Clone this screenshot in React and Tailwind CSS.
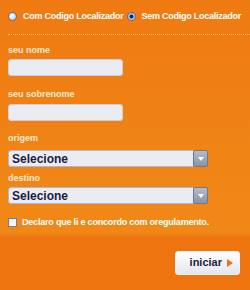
import React from "react";

const Radio = ({ checked }) => (
  <span
    className={
      "inline-block shrink-0 w-[9px] h-[9px] rounded-full border border-[#5a6f8e] " +
      (checked
        ? "bg-[radial-gradient(circle,#0a2a6a_0,#0a2a6a_35%,#9fb4d8_45%,#e6eefa_100%)]"
        : "bg-[radial-gradient(circle_at_35%_35%,#ffffff_0,#dfe7f2_45%,#9fb0c8_100%)]")
    }
  />
);

const Select = () => (
  <div className="flex items-center w-[200px] h-[17px]">
    <div className="flex-1 h-full rounded-l-[3px] border border-[#a9b8d4] bg-[#ebecf2] flex items-center pl-[3px] text-[12px] font-bold text-[#1c1c44]">
      Selecione
    </div>
    <div className="w-[15px] h-full rounded-[2px] border border-[#6f7890] bg-[linear-gradient(#b5bccb,#8a93a8)] flex items-center justify-center ml-[-1px]">
      <span className="w-0 h-0 border-l-[3px] border-r-[3px] border-t-[4px] border-l-transparent border-r-transparent border-t-white" />
    </div>
  </div>
);

const App = () => {
  return (
    <div className="w-[250px] h-[290px] bg-[linear-gradient(#ef7a12,#f08716_70%,#f08716_80%,#ee7410_82%,#ee7410)] font-['Liberation_Sans',Arial,sans-serif] font-bold text-white overflow-hidden">
      <div className="flex items-center whitespace-nowrap pl-[8px] pt-[11px] h-[22px] text-[9px] tracking-[-0.25px]">
        <Radio />
        <span className="ml-[6px]">Com Codigo Localizador</span>
        <span className="ml-[3px] flex"><Radio checked /></span>
        <span className="ml-[6px]">Sem Codigo Localizador</span>
      </div>
      <div className="ml-[8px] mt-[12px] border-t border-dotted border-[#f7c27a]" />
      <div className="pl-[8px] text-[9px] text-[#fde9d2]">
        <div className="mt-[9px] h-[11px]">seu nome</div>
        <div className="mt-[4px] w-[115px] h-[17px] rounded-[3px] border border-[#c7d0e2] bg-[#ebecf2]" />
        <div className="mt-[12px] h-[11px]">seu sobrenome</div>
        <div className="mt-[5px] w-[115px] h-[17px] rounded-[3px] border border-[#c7d0e2] bg-[#ebecf2]" />
        <div className="mt-[11px] h-[11px]">origem</div>
        <div className="mt-[7px]"><Select /></div>
        <div className="mt-[5px] h-[11px]">destino</div>
        <div className="mt-[4px]"><Select /></div>
      </div>
      <div className="flex items-center whitespace-nowrap pl-[8px] mt-[12px] text-[9px] tracking-[-0.2px]">
        <span className="shrink-0 w-[9px] h-[9px] border border-[#6f7fa0] bg-[linear-gradient(135deg,#dfe6f2,#ffffff)]" />
        <span className="ml-[5px]">Declaro que li e concordo com oregulamento.</span>
      </div>
      <div className="flex justify-end pr-[10px] mt-[21px]">
        <div className="w-[65px] h-[24px] rounded-[3px] border border-[#f5f5f8] bg-[linear-gradient(#ffffff,#e4e6ee)] flex items-center justify-end pr-[6px] text-[11px] text-[#1c1c44]">
          iniciar
          <span className="ml-[5px] w-0 h-0 border-t-[4px] border-b-[4px] border-l-[6px] border-t-transparent border-b-transparent border-l-[#f07412]" />
        </div>
      </div>
    </div>
  );
};

export default App;
